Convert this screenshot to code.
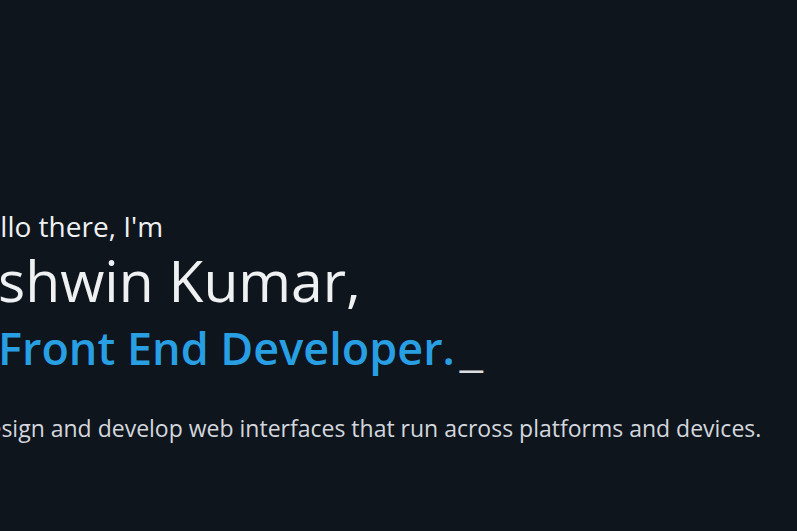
export default function App() {
  return (
    <div className="min-h-screen w-full overflow-hidden bg-[#0f151d] font-['Open_Sans',sans-serif]">
      <section className="pt-[206px] -ml-[36px]">
        <p className="text-[28px] leading-[40px] text-[#eef0f2]">Hello there, I'm</p>
        <h1 className="-ml-[2px] text-[57px] leading-[68px] font-normal text-[#eef0f2]">Ashwin Kumar,</h1>
        <h2 className="mt-[3px] ml-[34px] text-[45px] leading-[62px] font-semibold text-[#289fe2]">
          Front End Developer.
          <span className="ml-[5px] font-['Liberation_Sans',sans-serif] text-[41px] font-normal text-[#dcdee2]">_</span>
        </h2>
        <p className="mt-[30px] -ml-[2px] text-[23px] leading-[32px] text-[#d3d7dd]">
          I design and develop web interfaces that run across platforms and devices.
        </p>
      </section>
    </div>
  )
}
